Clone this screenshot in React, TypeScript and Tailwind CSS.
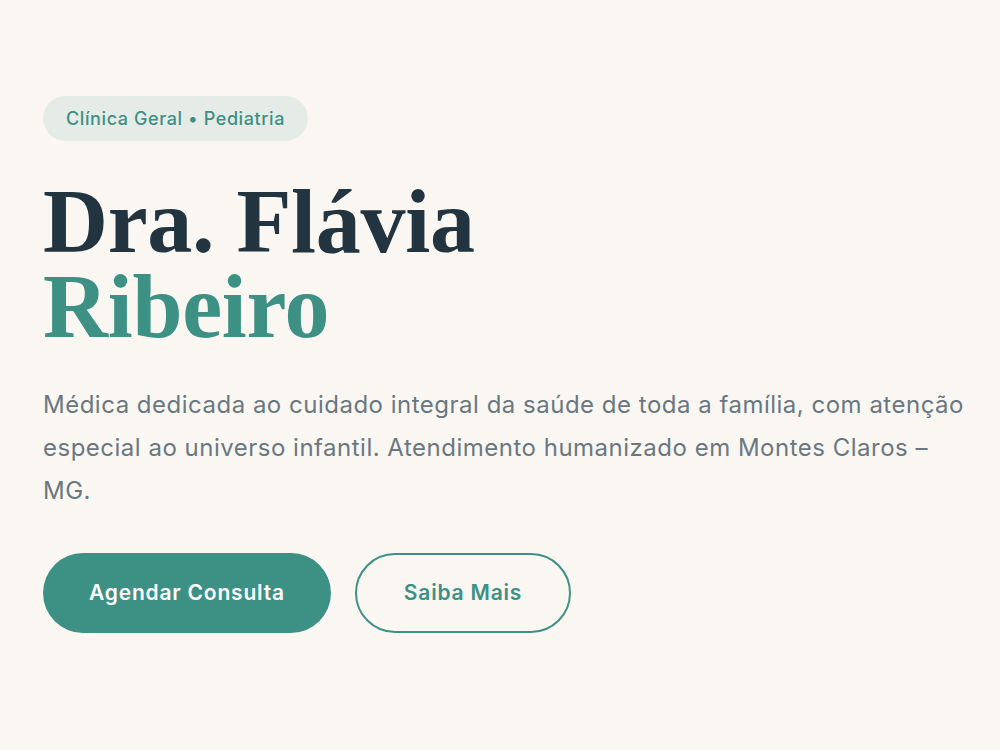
import React from "react";

const sans = { fontFamily: "Inter, 'Noto Sans', sans-serif" };
const serif = { fontFamily: "'Liberation Serif', 'Times New Roman', serif" };

export default function App() {
  return (
    <div className="min-h-[750px] w-full bg-[#faf7f3]" style={sans}>
      <section className="px-[43px] pt-[96px]">
        <span className="inline-flex h-[45px] items-center rounded-full bg-[#e5ece7] px-[23px] text-[18px] font-medium tracking-[0.6px] text-[#3f8f84]">
          Clínica Geral • Pediatria
        </span>

        <h1
          className="mt-[38px] text-[90px] font-bold leading-[85px] tracking-[-0.3px] text-[#22343f]"
          style={serif}
        >
          Dra. Flávia
          <br />
          <span className="text-[#3d9084]">Ribeiro</span>
        </h1>

        <p className="mt-[34px] whitespace-nowrap text-[24px] leading-[43px] tracking-[0.5px] text-[#6b7780]">
          Médica dedicada ao cuidado integral da saúde de toda a família, com atenção
          <br />
          especial ao universo infantil. Atendimento humanizado em Montes Claros –
          <br />
          MG.
        </p>

        <div className="mt-[41px] flex items-center gap-[24px]">
          <button className="h-[80px] rounded-full bg-[#3d9084] px-[46px] text-[21px] font-semibold tracking-[0.8px] text-white">
            Agendar Consulta
          </button>
          <button className="h-[80px] rounded-full border-2 border-[#3d9084] px-[47px] text-[21px] font-semibold tracking-[0.8px] text-[#3d9084]">
            Saiba Mais
          </button>
        </div>
      </section>
    </div>
  );
}
